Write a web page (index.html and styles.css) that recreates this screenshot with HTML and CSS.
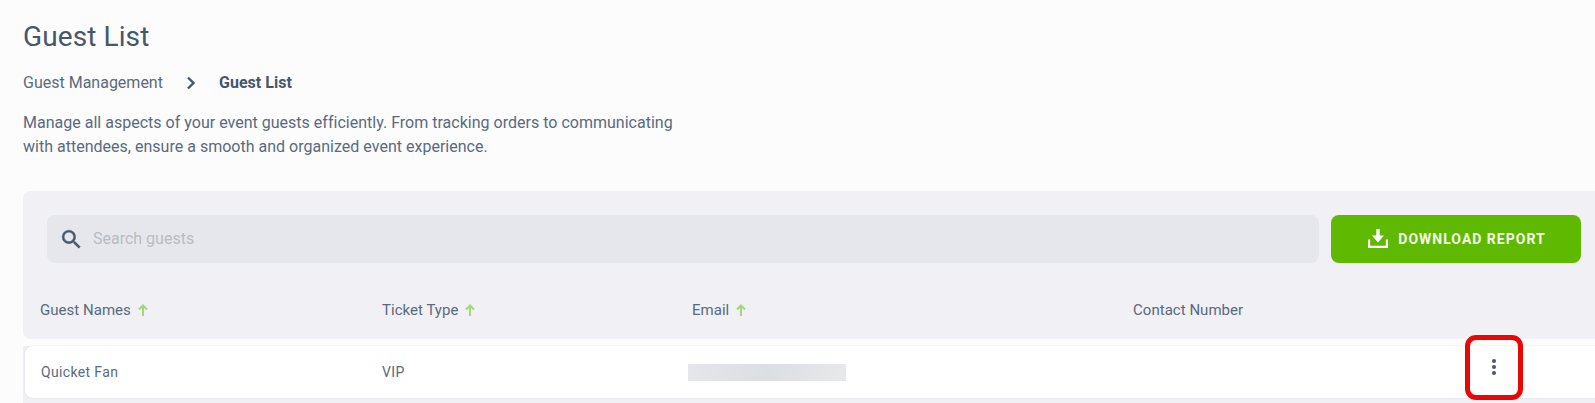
FILE: index.html
```html
<!DOCTYPE html>
<html lang="en">
<head>
<meta charset="utf-8">
<title>Guest List</title>
<link rel="stylesheet" href="styles.css">
</head>
<body>
<main class="page">
  <h1 class="title">Guest List</h1>
  <nav class="crumbs">
    <span>Guest Management</span>
    <svg class="chevron" viewBox="0 0 10 14" width="10" height="14"><path d="M2 1.500 7.500 7 2 12.500" fill="none" stroke="#46576b" stroke-width="2.400"/></svg>
    <strong>Guest List</strong>
  </nav>
  <p class="intro">Manage all aspects of your event guests efficiently. From tracking orders to communicating<br>with attendees, ensure a smooth and organized event experience.</p>
  <section class="panel">
    <div class="toolbar">
      <div class="search">
        <svg class="search-icon" viewBox="0 0 24 24" width="25" height="25"><path fill="#46576b" stroke="#46576b" stroke-width=".4" d="M15.500 14h-.79l-.28-.27A6.470 6.470 0 0 0 16 9.500 6.500 6.500 0 1 0 9.500 16c1.610 0 3.090-.59 4.230-1.570l.27.28v.79l5 4.990L20.490 19l-4.990-5zm-6 0C7.010 14 5 11.990 5 9.500S7.010 5 9.500 5 14 7.010 14 9.500 11.990 14 9.500 14z"/></svg>
        <span class="placeholder">Search guests</span>
      </div>
      <button class="download" type="button">
        <svg viewBox="0 0 20 20" width="20" height="20"><path fill="none" stroke="#fff" stroke-width="2.200" d="M1.100 10.500v7.400h17.800v-7.400"/><path fill="#fff" d="M8.300 0h3.400v6.500H16L10 13.500 4 6.500h4.300z"/></svg>
        DOWNLOAD REPORT
      </button>
    </div>
    <div class="columns grid">
      <div class="head">Guest Names <svg class="arrow" viewBox="0 0 10 12" width="10" height="12"><path fill="none" stroke="#a5d77a" stroke-width="2" d="M5 12V2M1 5.500 5 1.500l4 4"/></svg></div>
      <div class="head">Ticket Type <svg class="arrow" viewBox="0 0 10 12" width="10" height="12"><path fill="none" stroke="#a5d77a" stroke-width="2" d="M5 12V2M1 5.500 5 1.500l4 4"/></svg></div>
      <div class="head">Email <svg class="arrow" viewBox="0 0 10 12" width="10" height="12"><path fill="none" stroke="#a5d77a" stroke-width="2" d="M5 12V2M1 5.500 5 1.500l4 4"/></svg></div>
      <div class="head">Contact Number</div>
    </div>
  </section>
  <div class="rows">
    <div class="row grid">
      <div class="cell name">Quicket Fan</div>
      <div class="cell">VIP</div>
      <div class="cell"><div class="redacted"></div></div>
      <div class="cell"></div>
      <div class="menu">
        <span class="dot"></span><span class="dot"></span><span class="dot"></span>
        <span class="highlight"></span>
      </div>
    </div>
  </div>
</main>
</body>
</html>
```
FILE: styles.css
```css
* { box-sizing: border-box; }
html, body { margin: 0; height: 403px; overflow: hidden; }
body { background: #fcfcfd; color: #46576b; font-family: Roboto, "Liberation Sans", sans-serif; }
.page { padding: 20px 0 0 23px; width: 1595px; }
.title { margin: 0; font-size: 28px; font-weight: 400; line-height: 34px; height: 34px; letter-spacing: .1px; }
.crumbs { display: flex; align-items: center; margin-top: 17px; font-size: 16px; line-height: 24px; color: #5a6a7e; }
.crumbs strong { color: #46576b; font-weight: 700; letter-spacing: .05px; }
.chevron { margin: 0 23px 0 23px; }
.intro { margin: 16px 0 0; font-size: 16px; line-height: 24px; letter-spacing: .012px; color: #5a6a7e; }
.panel { margin-top: 32px; height: 148px; background: #f0f0f5; border-radius: 8px 0 0 8px; padding: 24px 14px 0 24px; }
.toolbar { display: flex; gap: 12px; height: 48px; }
.search { flex: 1; display: flex; align-items: center; background: #e6e7ec; border-radius: 8px; padding-left: 12px; }
.search-icon { flex: none; }
.placeholder { margin: -1px 0 0 9px; font-size: 16px; color: #b9bcc4; }
.download { flex: none; width: 250px; display: flex; align-items: center; justify-content: center; gap: 10px; padding-left: 8px; border: 0; border-radius: 8px; background: #5fb900; color: #f4fbea; font: 700 14px Roboto, sans-serif; letter-spacing: 1px; }
.grid { display: grid; grid-template-columns: 342px 310px 441px 1fr; }
.columns { margin: 0 0 0 -7px; padding-top: 35px; }
.head { display: flex; align-items: center; gap: 7px; font-size: 15px; line-height: 24px; letter-spacing: .03px; color: #5a6a7e; }
.arrow { flex: none; }
.rows { background: linear-gradient(#fcfcfd 0 7px, #f0f0f5 7px); padding: 7px 0 20px 2px; }
.row { position: relative; height: 52px; align-items: center; background: #fff; border-radius: 8px 0 0 8px; box-shadow: 0 0 2px rgba(70, 87, 107, .14); padding-left: 15px; font-size: 14px; letter-spacing: .35px; color: #5a6a7e; }
.cell { line-height: 20px; }
.name { padding-left: 1px; }
.redacted { width: 158px; height: 17px; margin-left: -4px; background: linear-gradient(90deg, #e4e6e9, #dcdfe2 50%, #e6e8ea); }
.menu { position: absolute; left: 1467px; top: 13px; display: flex; flex-direction: column; gap: 2px; width: 4px; }
.dot { width: 4px; height: 4px; border-radius: 50%; background: #46576b; }
.highlight { position: absolute; left: -27px; top: -24px; width: 58px; height: 65px; border: 5px solid #e80808; border-radius: 11px; }
```
